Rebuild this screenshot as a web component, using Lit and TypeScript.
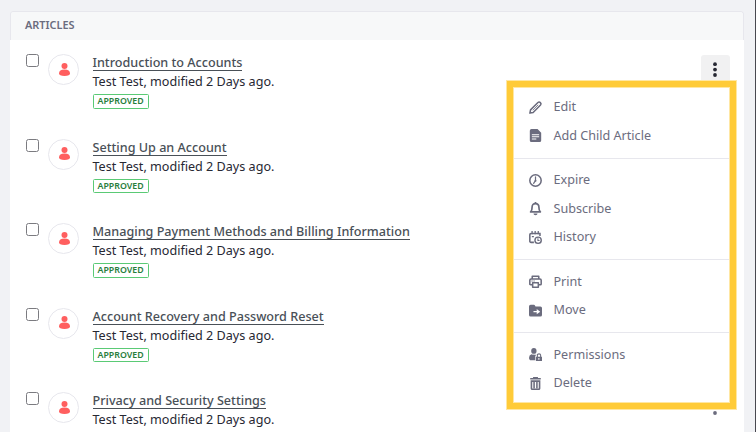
import { LitElement, html, svg, css, nothing } from "lit";
import { customElement } from "lit/decorators.js";

const icons: Record<string, unknown> = {
  edit: svg`<path d="M1.100 14.900 1.900 10.900 11 1.800Q12.500.500 14 2Q15.500 3.500 14.200 5L5.100 14.100Z" fill="none" stroke="currentColor" stroke-width="1.900" stroke-linejoin="round"/><path d="M4.700 11.400 11.300 4.700" fill="none" stroke="currentColor" stroke-width="1"/>`,
  page: svg`<path fill="currentColor" fill-rule="evenodd" d="M3 0h7.500L15 4.500V14q0 2-2 2H3q-2 0-2-2V2Q1 0 3 0ZM3.500 6.500v1.300h9V6.500ZM3.500 9v1.300h9V9ZM3.500 11.600v1.300H9v-1.300Z"/>`,
  clock: svg`<circle cx="8" cy="8" r="7" fill="none" stroke="currentColor" stroke-width="1.900"/><path d="M8 3.500V8L5.700 11.500" fill="none" stroke="currentColor" stroke-width="1.500" stroke-linecap="round"/><circle cx="8" cy="8.300" r="1.200" fill="currentColor"/>`,
  bell: svg`<path d="M2 12.200Q3.800 10.600 3.800 6.500Q3.800 2 8 2T12.200 6.500Q12.200 10.600 14 12.200Z" fill="none" stroke="currentColor" stroke-width="2.100" stroke-linejoin="round"/><path d="M5.500 14.300h5q0 1.900-2.500 1.900t-2.500-1.900ZM7 0h2v2H7Z" fill="currentColor"/>`,
  history: svg`<path d="M6 14H2.500Q1 14 1 12.500V4.500Q1 3 2.500 3H13.500V6" fill="none" stroke="currentColor" stroke-width="1.900"/><path d="M3 0h1.600v4H3ZM6.800 0h1.600v4H6.800ZM10.600 0h1.600v4h-1.600ZM3.500 6H6v1.800H3.500Z" fill="currentColor"/><circle cx="11.200" cy="11.400" r="3.900" fill="none" stroke="currentColor" stroke-width="1.700"/><path d="M11 9v2.700h2" fill="none" stroke="currentColor" stroke-width="1.300"/>`,
  print: svg`<path d="M4 4.500V1.500h8v3M4 12H2Q1 12 1 11V6.500Q1 5 2.500 5h11Q15 5 15 6.500V11q0 1-1 1h-2M4.500 9.500h7v5.500h-7Z" fill="none" stroke="currentColor" stroke-width="1.900" stroke-linejoin="round"/><path d="M3 6.700h1.500v1.200H3ZM5.500 6.700H7v1.200H5.500Z" fill="currentColor"/>`,
  move: svg`<path fill="currentColor" fill-rule="evenodd" d="M2 1h4q1 0 1.500 1L8 3h6q2 0 2 2v8.500q0 2-2 2H2q-2 0-2-2V3Q0 1 2 1ZM5.500 8.500v1.800h4v2.300L13.800 9.400 9.500 6.200v2.300Z"/>`,
  permissions: svg`<path fill="currentColor" fill-rule="evenodd" d="M6 0a3.300 3.600 0 1 1 0 7.200A3.300 3.600 0 1 1 6 0ZM6 8q1.800.9 3.500 0l-1.800 1.800V15H1.500Q0 14 0 12.200Q0 8.500 3 7.600Q4.500 8.500 6 8ZM8.500 10.800H16V16H8.500ZM11.500 12.200v2.200h1.300v-2.200Z"/><path d="M10.300 11V8.700Q10.300 7.200 12.300 7.200T14.300 8.700v2.300" fill="none" stroke="currentColor" stroke-width="1.300"/>`,
  trash: svg`<path fill="currentColor" fill-rule="evenodd" d="M5 0h6v1.200h3.500V3h-13V1.200H5ZM2 4h12v10q0 2-2 2H4q-2 0-2-2ZM4 6v8h8V6Z"/><path fill="currentColor" d="M5.300 6h1.900v8H5.300ZM8.800 6h1.900v8H8.800Z"/>`,
};

const articles = [
  { title: "Introduction to Accounts", status: "APPROVED" },
  { title: "Setting Up an Account", status: "APPROVED" },
  { title: "Managing Payment Methods and Billing Information", status: "APPROVED" },
  { title: "Account Recovery and Password Reset", status: "APPROVED" },
  { title: "Privacy and Security Settings", status: "" },
];

const groups = [
  [["edit", "Edit"], ["page", "Add Child Article"]],
  [["clock", "Expire"], ["bell", "Subscribe"], ["history", "History"]],
  [["print", "Print"], ["move", "Move"]],
  [["permissions", "Permissions"], ["trash", "Delete"]],
];

@customElement("article-row")
class ArticleRow extends LitElement {
  static properties = { heading: { type: String }, status: { type: String }, active: { type: Boolean } };
  declare heading: string;
  declare status: string;
  declare active: boolean;

  static styles = css`
    :host { display: flex; height: 84.5px; box-sizing: border-box; padding: 14px 15px 0 16px; }
    .check { width: 13px; height: 13px; box-sizing: border-box; border: 1px solid #7b7b80; border-radius: 2.5px; background: #fff; flex: none; }
    .avatar { width: 31px; height: 31px; box-sizing: border-box; border: 1px solid #e7e7ed; border-radius: 50%; margin-left: 9px; flex: none; display: flex; align-items: center; justify-content: center; }
    .avatar svg { width: 11px; height: 13px; margin: 0 0 1px 1px; }
    .info { margin: -1px 0 0 13.5px; flex: 1; white-space: nowrap; }
    .title { display: block; width: fit-content; font-size: 12.62px; line-height: 19px; height: 17px; font-weight: 500; color: #495057; border-bottom: 1px solid #495057; }
    .meta { font-size: 12.6px; line-height: 19px; color: #272833; margin-top: 1px; }
    .label { display: inline-flex; align-items: center; box-sizing: border-box; height: 14.6px; border: 1px solid #5aca75; border-radius: 1.5px; padding: 0 4px; font-size: 8.8px; font-weight: 600; color: #287d3c; vertical-align: top; margin-top: 3.2px; }
    .more { width: 29px; height: 29px; border-radius: 3px; display: flex; align-items: center; justify-content: center; color: #6b6c7e; margin: 1px -1px 0 0; }
    .more.active { background: #f1f1f2; color: #272833; }
    .more svg { width: 14px; height: 16px; margin: 0 1px 0 0; }
  `;

  render() {
    return html`
      <span class="check"></span>
      <span class="avatar"><svg viewBox="0 0 11 13" fill="#ff5f5f"><circle cx="5.500" cy="3" r="3"/><path d="M0 10.300Q0 6.500 5.500 6.500T11 10.300Q11 13 5.500 13T0 10.300Z"/></svg></span>
      <div class="info">
        <div class="title">${this.heading}</div>
        <div class="meta">Test Test, modified 2 Days ago.</div>
        ${this.status ? html`<span class="label">${this.status}</span>` : nothing}
      </div>
      <span class="more ${this.active ? "active" : ""}"><svg viewBox="0 0 14 16" fill="currentColor"><circle cx="7" cy="2.200" r="1.900"/><circle cx="7" cy="7.600" r="1.900"/><circle cx="7" cy="13" r="1.900"/></svg></span>
    `;
  }
}

@customElement("app-root")
class AppRoot extends LitElement {
  static styles = css`
    :host { display: block; position: relative; box-sizing: border-box; width: 756px; height: 432px; overflow: hidden; background: #f1f2f5; border-right: 1px solid #484850; padding: 11px 11px 0 10px; font-family: "Noto Sans", sans-serif; }
    .panel { height: 440px; background: #fff; border-radius: 3px 3px 0 0; }
    .head { box-sizing: border-box; height: 29px; background: #f7f8f9; border: 1px solid #e7e7ed; border-bottom: 0; border-radius: 3px 3px 0 0; padding: 0 14px; font-size: 10.9px; line-height: 26px; font-weight: 600; color: #6b6c7e; }
    .menu { position: absolute; left: 507px; top: 81px; width: 229px; height: 328px; box-sizing: border-box; border: 6px solid #ffcb38; background: #fff; padding-top: 5.4px; box-shadow: 0 0 0 1px #ffe7a3, inset 0 0 0 1px #ffe7a3; }
    .group + .group { border-top: 1px solid #e7e7ed; margin: 8.6px 1px 0; padding-top: 6.4px; }
    .item { display: flex; align-items: center; height: 28.5px; padding-left: 15px; gap: 11.5px; font-size: 12.6px; color: #6b6c7e; }
    .group:first-child { margin: 0 1px; }
    .item svg { width: 13px; height: 13px; flex: none; overflow: visible; margin-top: 1px; }
  `;

  render() {
    return html`
      <section class="panel">
        <header class="head">ARTICLES</header>
        ${articles.map((a, i) => html`<article-row .heading=${a.title} .status=${a.status} .active=${i === 0}></article-row>`)}
      </section>
      <nav class="menu">
        ${groups.map((g) => html`<div class="group">${g.map(([icon, text]) => html`<div class="item"><svg viewBox="0 0 16 16">${icons[icon]}</svg><span>${text}</span></div>`)}</div>`)}
      </nav>
    `;
  }
}
